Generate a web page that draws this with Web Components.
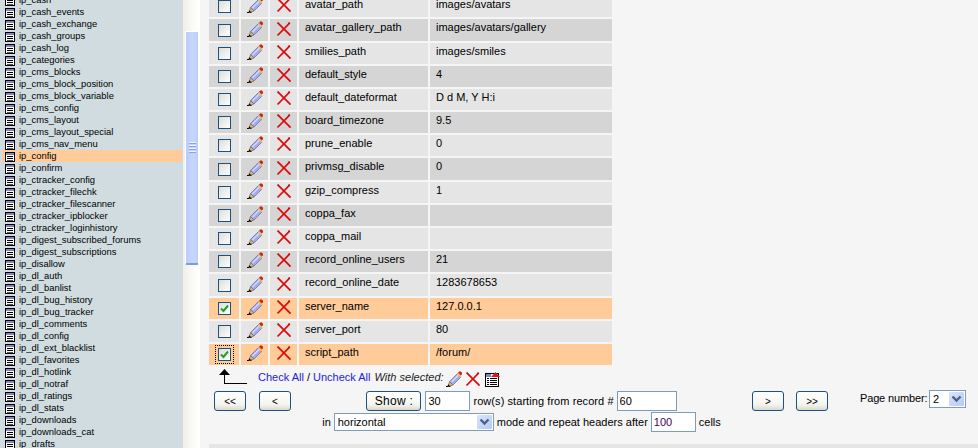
<!DOCTYPE html>
<html>
<head>
<meta charset="utf-8">
<title>ip_config</title>
<style>
html, body { margin: 0; height: 100%; overflow: hidden; }
body { font: 11px "Liberation Sans", Arial, sans-serif; color: #000; background: #f5f5f5; }
</style>
</head>
<body>
<pma-app>
  <pma-sidebar slot="side"></pma-sidebar>
  <pma-rows slot="main"></pma-rows>
  <pma-actions slot="main"></pma-actions>
  <pma-nav slot="main"></pma-nav>
  <pma-rule slot="main"></pma-rule>
</pma-app>

<script>
const PENCIL = `<svg width="16" height="16" viewBox="0 0 16 16">
<path d="M0 15.500h4.500" stroke="#000" stroke-width="1"/>
<path d="M3.500 10.500L7 14l-5 1.500z" fill="#d9b878" stroke="#6b4a20" stroke-width=".6"/>
<path d="M1.500 15.500l.7-2.300 1.600 1.600z" fill="#000"/>
<path d="M3.500 10.500l8-8L15 6l-8 8z" fill="#a6abe8" stroke="#6468a8" stroke-width=".7"/>
<path d="M5.500 11l7-7" stroke="#d8dcfa" stroke-width="1.200"/>
<path d="M11.500 2.500L15 6" stroke="#e8c840" stroke-width="1.300"/>
<path d="M12.200 1.800l.8-.8a1.400 1.400 0 0 1 2 0l.5.500a1.400 1.400 0 0 1 0 2l-.8.800z" fill="#d8201a" stroke="#96201a" stroke-width=".4"/>
</svg>`;

const CROSS = `<svg width="14" height="14" viewBox="0 0 14 14">
<path d="M.8.800L13.400 13.400M12.800.800L1 13" stroke="#e00808" stroke-width="1.700" fill="none"/>
<path d="M0 1h2M12 0v2M0 13h2M12 14h2" stroke="#a01010" stroke-width=".8" fill="none"/>
</svg>`;

const TABLE_ICON = `<svg width="10" height="10" viewBox="0 0 10 10" shape-rendering="crispEdges">
<rect x=".5" y=".5" width="9" height="9" fill="#fff" stroke="#000"/>
<rect x="1" y="1" width="8" height="2" fill="#8484b8"/>
<path d="M2 4.500h6M2 6.500h6" stroke="#000"/>
<path d="M2 8.500h6" stroke="#555"/>
</svg>`;

const PRINT_ICON = `<svg width="15" height="15" viewBox="0 0 15 15" shape-rendering="crispEdges">
<rect x=".5" y="1.500" width="13" height="13" fill="#fff" stroke="#000"/>
<rect x="1" y="2" width="5" height="3" fill="#8484b8"/>
<path d="M2 6.500h2M2 8.500h2M2 10.500h2M2 12.500h2M5 6.500h7M5 8.500h7M5 10.500h7M5 12.500h7" stroke="#000"/>
<path d="M6 5L10.500 0 15 5z" fill="#e01818" shape-rendering="auto"/>
</svg>`;

const CHEVRON = `<svg width="11" height="8" viewBox="0 0 11 8"><path d="M1.500 1.500l4 4 4-4" fill="none" stroke="#4d6185" stroke-width="2.400"/></svg>`;

const TABLES = ["ip_cash","ip_cash_events","ip_cash_exchange","ip_cash_groups","ip_cash_log","ip_categories","ip_cms_blocks","ip_cms_block_position","ip_cms_block_variable","ip_cms_config","ip_cms_layout","ip_cms_layout_special","ip_cms_nav_menu","ip_config","ip_confirm","ip_ctracker_config","ip_ctracker_filechk","ip_ctracker_filescanner","ip_ctracker_ipblocker","ip_ctracker_loginhistory","ip_digest_subscribed_forums","ip_digest_subscriptions","ip_disallow","ip_dl_auth","ip_dl_banlist","ip_dl_bug_history","ip_dl_bug_tracker","ip_dl_comments","ip_dl_config","ip_dl_ext_blacklist","ip_dl_favorites","ip_dl_hotlink","ip_dl_notraf","ip_dl_ratings","ip_dl_stats","ip_downloads","ip_downloads_cat","ip_drafts"];

// tall = this row is one pixel higher, the old table rounded its rows unevenly
const ROWS = [
  {name: "avatar_path", value: "images/avatars"},
  {name: "avatar_gallery_path", value: "images/avatars/gallery", tall: true},
  {name: "smilies_path", value: "images/smiles"},
  {name: "default_style", value: "4"},
  {name: "default_dateformat", value: "D d M, Y H:i"},
  {name: "board_timezone", value: "9.5"},
  {name: "prune_enable", value: "0"},
  {name: "privmsg_disable", value: "0", tall: true},
  {name: "gzip_compress", value: "1"},
  {name: "coppa_fax", value: ""},
  {name: "coppa_mail", value: ""},
  {name: "record_online_users", value: "21"},
  {name: "record_online_date", value: "1283678653", tall: true},
  {name: "server_name", value: "127.0.0.1", checked: true},
  {name: "server_port", value: "80"},
  {name: "script_path", value: "/forum/", checked: true, focused: true},
];

class PmaApp extends HTMLElement {
  constructor() {
    super();
    this.attachShadow({mode: "open"}).innerHTML = `
<style>
:host { display: flex; height: 448px; overflow: hidden; }
.side { width: 183px; flex: none; background: #d0dce0; overflow: hidden; }
.bar { width: 16px; flex: none; box-sizing: border-box; padding-top: 31px; background: linear-gradient(90deg, #f0eee6, #fbfaf6 60%, #fff); }
.thumb { height: 234px; margin-left: 2px; box-sizing: border-box; border: 1px solid #fff; border-bottom: 2px solid #7c9bd8; border-radius: 2px; background: linear-gradient(90deg, #b8ccfa, #c8d6fc 60%, #bccdf8); display: flex; flex-direction: column; justify-content: center; align-items: center; gap: 1px; }
.thumb i { display: block; width: 7px; height: 1px; background: #eef2ff; border-bottom: 1px solid #8aa3e0; }
.edge { width: 1px; flex: none; background: #fff; }
.main { flex: 1; min-width: 0; padding: 0 0 0 9px; background: #f5f5f5; overflow: hidden; }
</style>
<div class="side"><slot name="side"></slot></div>
<div class="bar"><div class="thumb"><i></i><i></i><i></i><i></i></div></div>
<div class="edge"></div>
<div class="main"><slot name="main"></slot></div>`;
  }
}

class PmaSidebar extends HTMLElement {
  constructor() {
    super();
    let items = TABLES.map(t => `<div class="item${t == "ip_config" ? " on" : ""}">${TABLE_ICON}<span>${t}</span></div>`).join("");
    this.attachShadow({mode: "open"}).innerHTML = `
<style>
:host { display: block; margin-top: -6px; padding-left: 2px; font: 9.4px/12px "Liberation Sans", Arial, sans-serif; color: #000; }
.item { display: flex; align-items: center; gap: 4px; height: 12px; padding-left: 3px; white-space: nowrap; }
.item.on { background: #ffcc99; margin-right: 1px; }
svg { flex: none; align-self: flex-end; }
</style>
${items}`;
  }
}

class PmaRow extends HTMLElement {
  constructor() {
    super();
    this.attachShadow({mode: "open"}).innerHTML = `
<style>
:host { display: grid; grid-template-columns: 30px 27px 27px 129px 182px; gap: 2px; height: 21px; margin-bottom: 2px; color: #000; }
:host([tall]) { height: 22px; }
.c { background: var(--cell); display: flex; align-items: center; overflow: hidden; }
.ic { justify-content: center; box-sizing: border-box; padding-bottom: 3px; }
.ck { justify-content: center; overflow: visible; }
.t { padding-left: 6px; white-space: nowrap; padding-bottom: 5px; box-sizing: border-box; }
:host([tall]) .t { padding-bottom: 6px; }
.box { position: relative; width: 13px; height: 13px; box-sizing: border-box; border: 1px solid #1c5180; background: linear-gradient(135deg, #dcdcd7, #fff); }
:host([checked]) .box svg { display: block; }
.box svg { display: none; position: absolute; left: 1px; top: 1px; }
:host([focused]) .box { outline: 1px dotted #000; outline-offset: 2px; }
</style>
<div class="c ck"><div class="box"><svg width="9" height="9" viewBox="0 0 9 9"><path d="M1 4.500l2.500 2.500L8 1.500" fill="none" stroke="#21a121" stroke-width="2"/></svg></div></div>
<div class="c ic">${PENCIL}</div>
<div class="c ic">${CROSS}</div>
<div class="c t"><slot name="name"></slot></div>
<div class="c t"><slot name="value"></slot></div>`;
  }
}

class PmaRows extends HTMLElement {
  constructor() {
    super();
    let rows = ROWS.map((r, i) => {
      let cell = r.checked ? "#ffcc99" : (i % 2 ? "#d5d5d5" : "#e5e5e5");
      let flags = (r.tall ? " tall" : "") + (r.checked ? " checked" : "") + (r.focused ? " focused" : "");
      return `<pma-row style="--cell:${cell}"${flags}><span slot="name">${r.name}</span><span slot="value">${r.value}</span></pma-row>`;
    }).join("");
    this.attachShadow({mode: "open"}).innerHTML = `
<style>
:host { display: block; margin-top: -4px; font: 11px "Liberation Sans", Arial, sans-serif; }
</style>
${rows}`;
  }
}

class PmaActions extends HTMLElement {
  constructor() {
    super();
    this.attachShadow({mode: "open"}).innerHTML = `
<style>
:host { display: flex; align-items: center; height: 24px; padding-left: 10px; font: 11px "Liberation Sans", Arial, sans-serif; white-space: nowrap; }
.arrow { flex: none; margin: -4px 11px 0 0; }
.txt { padding-bottom: 4px; }
a { color: #2222dd; text-decoration: none; }
i { margin-left: 1px; color: #222; }
svg { flex: none; display: block; }
.ic { margin-left: 2px; }
.ic + .ic { margin-left: 4px; }
.ic + .ic + .ic { margin-left: 5px; }
</style>
<svg class="arrow" width="28" height="16" viewBox="0 0 28 16" shape-rendering="crispEdges"><path d="M5.500 5v9.500H28" fill="none" stroke="#000"/><path d="M0 6L5.500 0 11 6z" fill="#000" shape-rendering="auto"/></svg>
<span class="txt"><a>Check All</a> / <a>Uncheck All</a> <i>With selected:</i></span>
<span class="ic">${PENCIL}</span>
<span class="ic">${CROSS}</span>
<span class="ic">${PRINT_ICON}</span>`;
  }
}

class PmaButton extends HTMLElement {
  constructor() {
    super();
    this.attachShadow({mode: "open"}).innerHTML = `
<style>
:host { display: inline-flex; align-items: center; justify-content: center; box-sizing: border-box; width: 32px; height: 20px; border: 1px solid #1c5180; border-radius: 3px; background: linear-gradient(180deg, #fff, #f4f4ef 70%, #dcd8cc); font: 10px "Liberation Sans", Arial, sans-serif; }
</style>
<slot></slot>`;
  }
}

class PmaField extends HTMLElement {
  static get observedAttributes() { return ["value"]; }
  constructor() {
    super();
    this.attachShadow({mode: "open"}).innerHTML = `
<style>
:host { display: inline-block; box-sizing: border-box; height: 20px; border: 1px solid #7f9db9; background: #fff; }
input { display: block; box-sizing: border-box; width: 100%; height: 100%; margin: 0; padding: 0 2px; border: 0; outline: 0; background: transparent; font: 11px "Liberation Sans", Arial, sans-serif; color: var(--ink, #000); }
</style>
<input type="text">`;
  }
  attributeChangedCallback(name, old, val) {
    this.shadowRoot.querySelector("input").setAttribute("value", val);
  }
}

class PmaSelect extends HTMLElement {
  constructor() {
    super();
    this.attachShadow({mode: "open"}).innerHTML = `
<style>
:host { display: inline-flex; align-items: center; justify-content: space-between; box-sizing: border-box; height: 18px; padding: 0 1px 0 3px; border: 1px solid #7f9db9; background: #fff; font: 11px "Liberation Sans", Arial, sans-serif; }
.btn { width: 15px; height: 14px; border-radius: 1px; background: linear-gradient(135deg, #dbe4fb, #b6c8f6); display: flex; align-items: center; justify-content: center; }
</style>
<slot></slot>
<div class="btn">${CHEVRON}</div>`;
  }
}

class PmaNav extends HTMLElement {
  constructor() {
    super();
    this.attachShadow({mode: "open"}).innerHTML = `
<style>
:host { display: flex; width: 752px; padding-left: 5px; font: 11px "Liberation Sans", Arial, sans-serif; white-space: nowrap; }
.group { display: flex; gap: 13px; flex: none; align-items: flex-start; }
.group.next { gap: 12px; }
.mid { flex: 1; display: flex; flex-direction: column; align-items: center; gap: 1px; }
.line { display: flex; align-items: center; }
.page { flex: none; width: 106px; display: flex; align-items: center; justify-content: space-between; align-self: flex-start; margin: -1px 0 0 32px; }
.page span { letter-spacing: -.15px; padding-bottom: 2px; }
.show { width: 55px; margin-right: 4px; font-size: 12px; letter-spacing: .3px; }
.gapl { margin-left: 3px; } .gapr { margin-right: 3px; }
.wide { letter-spacing: .07px; }
</style>
<div class="group"><pma-button>&lt;&lt;</pma-button><pma-button>&lt;</pma-button></div>
<div class="mid">
  <div class="line"><pma-button class="show">Show :</pma-button><pma-field style="width:45px" value="30"></pma-field><span class="gapl gapr wide">row(s) starting from record #</span><pma-field style="width:60px" value="60"></pma-field></div>
  <div class="line"><span class="gapr">in</span><pma-select style="width:160px">horizontal</pma-select><span class="gapl gapr">mode and repeat headers after</span><pma-field style="width:45px;--ink:#400060" value="100"></pma-field><span class="gapl">cells</span></div>
</div>
<div class="group next"><pma-button>&gt;</pma-button><pma-button>&gt;&gt;</pma-button></div>
<div class="page"><span>Page number:</span><pma-select style="width:37px">2</pma-select></div>`;
  }
}

class PmaRule extends HTMLElement {
  constructor() {
    super();
    this.attachShadow({mode: "open"}).innerHTML = `
<style>
:host { display: block; height: 4px; margin-top: 12px; background: #e5e5e5; }
</style>`;
  }
}

customElements.define("pma-app", PmaApp);
customElements.define("pma-sidebar", PmaSidebar);
customElements.define("pma-row", PmaRow);
customElements.define("pma-rows", PmaRows);
customElements.define("pma-actions", PmaActions);
customElements.define("pma-button", PmaButton);
customElements.define("pma-field", PmaField);
customElements.define("pma-select", PmaSelect);
customElements.define("pma-nav", PmaNav);
customElements.define("pma-rule", PmaRule);
</script>
</body>
</html>
